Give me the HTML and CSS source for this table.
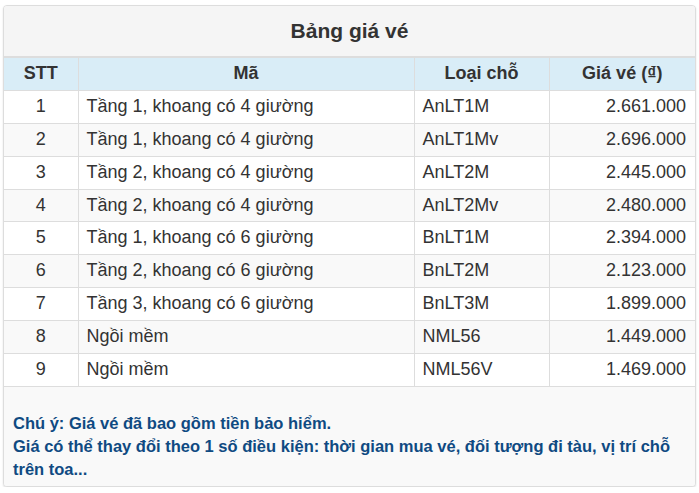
FILE: index.html
```html
<!DOCTYPE html>
<html lang="vi">
<head>
<meta charset="utf-8">
<title>Bảng giá vé</title>
<link rel="stylesheet" href="styles.css">
</head>
<body>
<div class="panel">
  <div class="panel-heading">Bảng giá vé</div>
  <table class="price-table">
    <colgroup>
      <col class="c-stt">
      <col class="c-ma">
      <col class="c-loai">
      <col class="c-gia">
    </colgroup>
    <thead>
      <tr><th>STT</th><th>Mã</th><th>Loại chỗ</th><th>Giá vé (₫)</th></tr>
    </thead>
    <tbody>
      <tr><td class="num">1</td><td>Tầng 1, khoang có 4 giường</td><td>AnLT1M</td><td class="price">2.661.000</td></tr>
      <tr><td class="num">2</td><td>Tầng 1, khoang có 4 giường</td><td>AnLT1Mv</td><td class="price">2.696.000</td></tr>
      <tr><td class="num">3</td><td>Tầng 2, khoang có 4 giường</td><td>AnLT2M</td><td class="price">2.445.000</td></tr>
      <tr><td class="num">4</td><td>Tầng 2, khoang có 4 giường</td><td>AnLT2Mv</td><td class="price">2.480.000</td></tr>
      <tr><td class="num">5</td><td>Tầng 1, khoang có 6 giường</td><td>BnLT1M</td><td class="price">2.394.000</td></tr>
      <tr><td class="num">6</td><td>Tầng 2, khoang có 6 giường</td><td>BnLT2M</td><td class="price">2.123.000</td></tr>
      <tr><td class="num">7</td><td>Tầng 3, khoang có 6 giường</td><td>BnLT3M</td><td class="price">1.899.000</td></tr>
      <tr><td class="num">8</td><td>Ngồi mềm</td><td>NML56</td><td class="price">1.449.000</td></tr>
      <tr><td class="num">9</td><td>Ngồi mềm</td><td>NML56V</td><td class="price">1.469.000</td></tr>
    </tbody>
  </table>
  <div class="panel-footer">
    <p>Chú ý: Giá vé đã bao gồm tiền bảo hiểm.</p>
    <p>Giá có thể thay đổi theo 1 số điều kiện: thời gian mua vé, đối tượng đi tàu, vị trí chỗ trên toa...</p>
  </div>
</div>
</body>
</html>
```
FILE: styles.css
```css
html, body {
  margin: 0;
  padding: 0;
  background: #fff;
}
body {
  font-family: "Liberation Sans", Arial, Helvetica, sans-serif;
  color: #333;
  padding: 5px 3px 0 3px;
}
.panel {
  border: 1px solid #ddd;
  border-radius: 4px;
  background: #fff;
  box-shadow: 0 1px 2px rgba(0, 0, 0, 0.12);
  overflow: hidden;
}
.panel-heading {
  background: #f5f5f5;
  height: 50px;
  line-height: 50px;
  text-align: center;
  font-size: 21px;
  font-weight: bold;
  border-bottom: 2px solid #ddd;
}
.price-table {
  width: 100%;
  border-collapse: collapse;
  table-layout: fixed;
  font-size: 18px;
}
.c-stt { width: 74px; }
.c-ma { width: 336px; }
.c-loai { width: 135px; }
.price-table th,
.price-table td {
  border: 1px solid #ddd;
  padding: 8px;
  line-height: 15.875px;
}
.price-table tr > :first-child { border-left: 0; }
.price-table tr > :last-child { border-right: 0; }
.price-table thead th {
  background: #d9edf7;
  border-top: 0;
  text-align: center;
  font-weight: bold;
}
.price-table tbody tr:nth-child(even) {
  background: #f9f9f9;
}
.price-table td.num { text-align: center; }
.price-table td.price { text-align: right; padding-right: 9px; }
.panel-footer {
  background: #f9f9f9;
  padding: 25px 9px 5px;
  color: #0f4a82;
  font-weight: bold;
  font-size: 16.5px;
  line-height: 23px;
}
.panel-footer p {
  margin: 0;
}
```
